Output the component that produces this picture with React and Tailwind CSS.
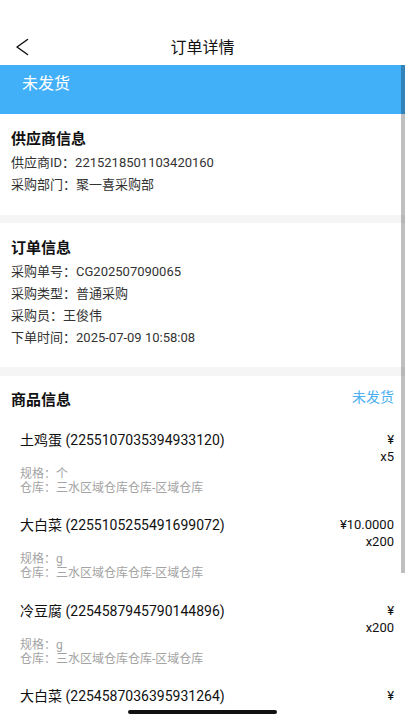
const font = { fontFamily: 'Roboto, "Noto Sans CJK SC", "Noto Sans", sans-serif' };

const goods = [
  { name: '土鸡蛋', id: '2255107035394933120', price: '¥', qty: 'x5', spec: '个' },
  { name: '大白菜', id: '2255105255491699072', price: '¥10.0000', qty: 'x200', spec: 'g' },
  { name: '冷豆腐', id: '2254587945790144896', price: '¥', qty: 'x200', spec: 'g' },
  { name: '大白菜', id: '2254587036395931264', price: '¥', qty: 'x200', spec: 'g' },
];

function Row({ label, value }) {
  return (
    <div className="text-[13px] leading-[22px] text-[#333]">
      {label}：{value}
    </div>
  );
}

export default function App() {
  return (
    <div className="relative w-[405px] h-[720px] overflow-hidden bg-white text-[#111]" style={font}>
      {/* ── Header ── */}
      <div className="h-[30px]" />
      <div className="relative h-[35px] flex items-center justify-center">
        <svg
          width="16"
          height="18"
          viewBox="0 0 16 18"
          className="absolute left-[14px] top-[8px]"
          fill="none"
          stroke="#111"
          strokeWidth="1.5"
          strokeLinecap="round"
          strokeLinejoin="round"
        >
          <polyline points="13.5,1.5 3,9 13.5,16.5" />
        </svg>
        <span className="text-[16px] leading-none">订单详情</span>
      </div>

      {/* ── Status banner ── */}
      <div className="h-[49px] bg-[#42aff9] px-[22px] pt-[8px] text-white text-[16px] leading-[22px]">
        未发货
      </div>

      {/* ── Supplier ── */}
      <div className="px-[11px] pt-[14px] pb-[19px]">
        <div className="text-[15px] font-bold leading-[22px] mb-[2px]">供应商信息</div>
        <Row label="供应商ID" value="2215218501103420160" />
        <Row label="采购部门" value="聚一喜采购部" />
      </div>
      <div className="h-[8px] bg-[#f5f5f5]" />

      {/* ── Order ── */}
      <div className="px-[11px] pt-[14px] pb-[18px]">
        <div className="text-[15px] font-bold leading-[22px] mb-[2px]">订单信息</div>
        <Row label="采购单号" value="CG202507090065" />
        <Row label="采购类型" value="普通采购" />
        <Row label="采购员" value="王俊伟" />
        <Row label="下单时间" value="2025-07-09 10:58:08" />
      </div>
      <div className="h-[9px] bg-[#f5f5f5]" />

      {/* ── Goods ── */}
      <div className="px-[11px] pt-[11px]">
        <div className="flex items-start justify-between">
          <div className="text-[15px] font-bold leading-[22px] mt-[2px]">商品信息</div>
          <div className="text-[14px] leading-[20px] text-[#4db0f0]">未发货</div>
        </div>
        <div className="mt-[20px] pl-[9px]">
          {goods.map((g, i) => (
            <div key={i} className="h-[85.3px]">
              <div className="flex justify-between">
                <div className="text-[14px] leading-[18px] text-[#111]">
                  {g.name} ({g.id})
                </div>
                <div className="text-right text-[13px] leading-[17px] text-[#111]">
                  <div>{g.price}</div>
                  <div>{g.qty}</div>
                </div>
              </div>
              <div className="mt-[2px] text-[12px] leading-[14px] text-[#a3a3a3]">
                <div>规格：{g.spec}</div>
                <div>仓库：三水区域仓库仓库-区域仓库</div>
              </div>
            </div>
          ))}
        </div>
      </div>

      {/* ── Scroll indicator ── */}
      <div className="absolute right-0 top-[65px] w-[4px] h-[508px] bg-black/25" />

      {/* ── Safe area + home indicator ── */}
      <div className="absolute left-0 bottom-0 w-full h-[13px] bg-white" />
      <div className="absolute left-[128px] bottom-[6px] w-[149px] h-[4px] rounded-full bg-[#111]" />
    </div>
  );
}
